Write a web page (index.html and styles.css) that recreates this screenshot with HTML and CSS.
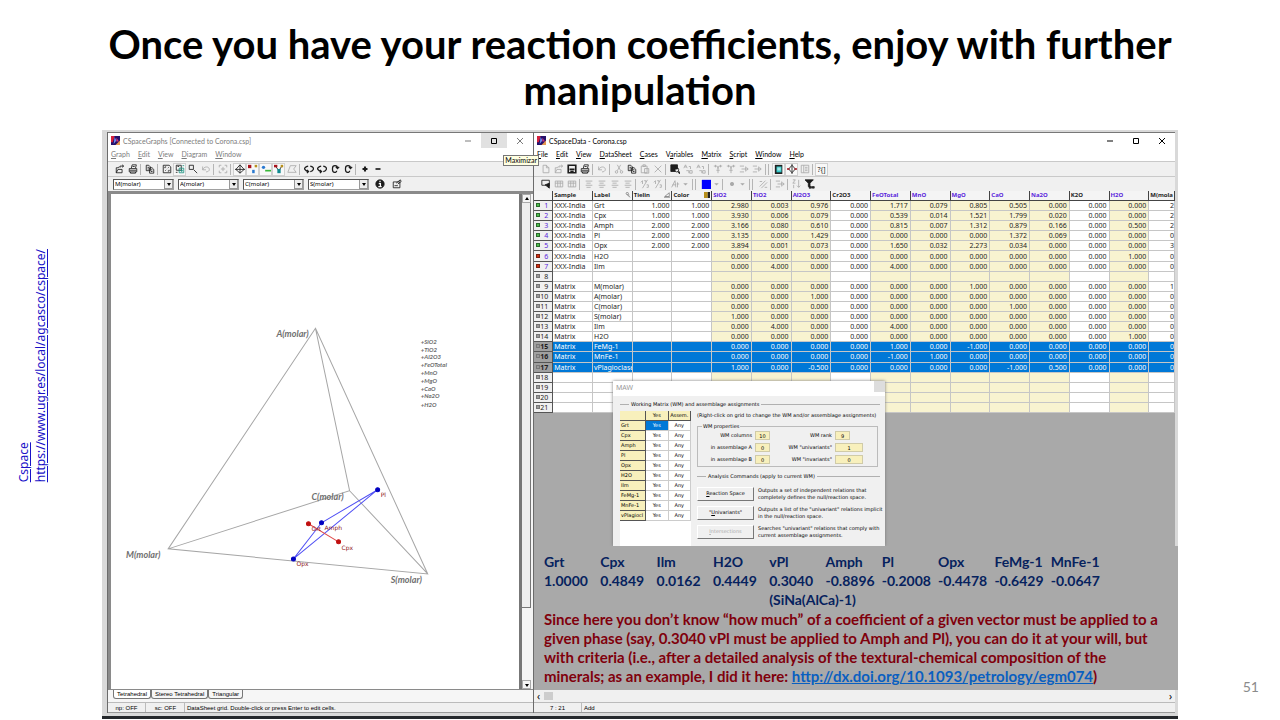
FILE: index.html
```html
<!DOCTYPE html>
<html lang="en">

<head>
  <meta charset="UTF-8">
  <meta name="viewport" content="width=device-width, initial-scale=1.0">
  <title>Reaction coefficients</title>
  <link rel="stylesheet" href="styles.css">
</head>

<body>
  <!-- toolbar icons -->
  <svg class="sprite" aria-hidden="true">
    <symbol id="i-open" viewBox="0 0 12 12"><path d="M1.500 10.500V4.500H4l1-1.500M1.500 10.500h7V6.500h-5l-2 4M6 4.500V2.500h4M8.500 1l2 1.500-2 1.500" /></symbol>
    <symbol id="i-print" viewBox="0 0 12 12"><path d="M4 5l1-4h5l-1 4M1.500 5.500h9v4h-9zM3 9.500v1.500h6V9.500M2 7.500h8M5.500 3h2.500" /></symbol>
    <symbol id="i-copy" viewBox="0 0 12 12"><path d="M1.500 1.500h3l2 2v4.500h-5zM5.500 4.500h3l2 2v4.500h-5zM3 4h2M3 6h2M7 7h2M7 9h2" /></symbol>
    <symbol id="i-fit" viewBox="0 0 12 12"><path d="M1.500 1.500h7l2 2v7h-9zM3.500 5V3.500H5M8.500 7v1.500H7M4 8l1-1M7 5l1-1" /></symbol>
    <symbol id="i-zoomfit" viewBox="0 0 12 12"><path d="M1.500 1.500h6v6h-6zM3 3h2M1 10h2" /><path class="s-teal" d="M5 5h5.500v5.500H5zM8 6v3.500M6.500 8h3M9 2h2" /></symbol>
    <symbol id="i-zoom" viewBox="0 0 12 12"><path d="M1.500 1.500h5v5h-5zM7 7l4 4" /></symbol>
    <symbol id="i-undo" viewBox="0 0 12 12"><path d="M2 3v4h4M2 7c2-5 8-4 8-.5 0 2-2 3-4 3" /></symbol>
    <symbol id="i-frame" viewBox="0 0 12 12"><path d="M1.500 4V1.500H4M8 1.500h2.500V4M10.500 8v2.500H8M4 10.500H1.500V8M3.500 6h5M6 3.500v5" /></symbol>
    <symbol id="i-tetra" viewBox="0 0 12 12"><path d="M6 1l5 5.500L6 11 1 6.500zM0 6.500h12M6 1v10" /></symbol>
    <symbol id="i-dots" viewBox="0 0 12 12"><path class="f-red" d="M0 1h4v4H0z" /><path class="f-gold" d="M8 1h3v3H8z" /><path class="f-blue" d="M5 7h3v4H5z" /></symbol>
    <symbol id="i-tie" viewBox="0 0 12 12"><circle class="f-blue" cx="3" cy="4" r="2" /><path class="f-green" d="M5 7h7v2H5z" /></symbol>
    <symbol id="i-dots2" viewBox="0 0 12 12"><path d="M2 3l4 5 3-5" /><path class="f-red" d="M0 1h4v3H0z" /><path class="f-gold" d="M8 1h3v3H8z" /><path class="f-teal" d="M4 6h4v5H4z" /></symbol>
    <symbol id="i-poly" viewBox="0 0 12 12"><path d="M4 2h7L8 6l3 4H1z" /></symbol>
    <symbol id="i-rot" viewBox="0 0 12 12"><path d="M5 2.500C2 3 0 5 1 6.500S4 9 5 9M3.500 7l2 2-2 2M7.500 2.500c3 .5 4.500 2.500 3.500 4.500-.5 1-2 2-3.500 2" stroke-width="1.500" /></symbol>
    <symbol id="i-turn" viewBox="0 0 12 12"><path d="M3 5c0-4 6-4 6 0M7 3.500l2 2 2-2M3 5v2c0 4 5 4 5 1" stroke-width="1.500" /></symbol>
    <symbol id="i-plus" viewBox="0 0 12 12"><path d="M3 6h6M6 3v6" stroke-width="2.500" /></symbol>
    <symbol id="i-minus" viewBox="0 0 12 12"><path d="M3 6h6" stroke-width="2" /></symbol>
    <symbol id="i-info" viewBox="0 0 12 12"><circle cx="6" cy="6" r="5" fill="currentColor" /><path class="s-white" d="M4.500 5.500h2v4M6 2v2M4 9h4" stroke-width="1.500" /></symbol>
    <symbol id="i-props" viewBox="0 0 12 12"><path d="M1.500 3.500h8v7h-8zM5 5l5-4 1 2-4 3M3 8h4" /></symbol>
    <symbol id="i-new" viewBox="0 0 12 12"><path d="M2.500 1.500h4l3 3v6h-7zM6.500 1.500v3h3" /></symbol>
    <symbol id="i-save" viewBox="0 0 12 12"><path d="M1.500 1.500h9v9h-9z" stroke-width="2" /><path d="M3 6.500h6M4 9h4" stroke-width="2" /></symbol>
    <symbol id="i-cut" viewBox="0 0 12 12"><path d="M4 1l4 7M8 1L4 8" /><circle cx="3" cy="9.500" r="1.500" /><circle cx="9" cy="9.500" r="1.500" /></symbol>
    <symbol id="i-paste" viewBox="0 0 12 12"><path d="M1.500 2.500h7v8h-7zM3.500 1h3v2h-3zM5.500 5.500h5v5.500h-5z" /></symbol>
    <symbol id="i-del" viewBox="0 0 12 12"><path d="M2 2l8 8M10 2l-8 8" /></symbol>
    <symbol id="i-find" viewBox="0 0 12 12"><path fill="currentColor" d="M1 1h8v5H6v3H1z" /><circle cx="8" cy="7" r="2.500" /><path d="M10 9l2 2.500" stroke-width="2" /></symbol>
    <symbol id="i-swap" viewBox="0 0 12 12"><path d="M1 5l2-4 2 4M2 3.500h2M7 3h2v3M4 8h3v3M8 8h3v3H8z" /></symbol>
    <symbol id="i-filter" viewBox="0 0 12 12"><path d="M1 2.500h4l1 3 1-3h4M6 5v6M3 1v3M9 1v3M4 7.500h4" /></symbol>
    <symbol id="i-insert" viewBox="0 0 12 12"><path d="M1 2.500h5M1 9.500h5M3 6h8M8 3v6M9 4l2 2-2 2" /></symbol>
    <symbol id="i-sheet" viewBox="0 0 12 12"><path class="f-black" d="M1 1h9v11H1z" /><path class="f-cyan" d="M3 3h6v7H3z" /><path class="s-white" d="M4 5h4M4 7h4" /></symbol>
    <symbol id="i-diamond" viewBox="0 0 12 12"><path d="M6 0v12M6 1.500l4 4.500-4 4.500L2 6z" /><path class="f-red" d="M0 5h3v2H0zM9 5h3v2H9z" /></symbol>
    <symbol id="i-list" viewBox="0 0 12 12"><path d="M1.500 1.500h9v9h-9zM4.500 1.500v9M6 4h3M6 6h3M6 8h3" /></symbol>
    <symbol id="i-pick" viewBox="0 0 12 12"><path d="M1 1.500h9v7M1 1.500v6h5" /><path fill="currentColor" d="M5 7l5-2v6z" /></symbol>
    <symbol id="i-grid" viewBox="0 0 12 12"><path d="M1.500 2.500h9v7h-9zM1.500 5h9M4.500 2.500v7M7.500 2.500v7" /></symbol>
    <symbol id="i-align" viewBox="0 0 12 12"><path d="M2 2.500h8M3 5h5M2 7.500h8M3 10h5" /></symbol>
    <symbol id="i-pct" viewBox="0 0 12 12"><path d="M9 1L3 11M1 4l2-2v4M8 7h2v3H8M5 2h2v2" /></symbol>
    <symbol id="i-font" viewBox="0 0 12 12"><path d="M2 10l4-8 1 8M3 7h4M9 4v6M8 6h3" /></symbol>
    <symbol id="i-caret" viewBox="0 0 12 12"><path fill="currentColor" stroke="none" d="M3 5h6L6 8z" /></symbol>
    <symbol id="i-square" viewBox="0 0 12 12"><path class="f-pure" d="M1 1h11v11H1z" /></symbol>
    <symbol id="i-dot" viewBox="0 0 12 12"><circle cx="6" cy="6" r="2" fill="currentColor" /></symbol>
    <symbol id="i-line" viewBox="0 0 12 12"><path d="M2 9l7-7M4 11l7-7M2 3h3M8 10h3" /></symbol>
    <symbol id="i-sort" viewBox="0 0 12 12"><path d="M1 1h3L1 5h3M2 7v4M8 1v9M6 8l2 2 2-2" /></symbol>
    <symbol id="i-funnel" viewBox="0 0 12 12"><path fill="currentColor" d="M0 1h10L6 5v4H4V5zM5 9h2v2H5zM8 9h1v2H8zM10 9h1v2h-1z" /></symbol>
    <symbol id="i-app" viewBox="0 0 10 10"><path d="M0 0h10v10H0z" fill="#24106a" /><path d="M0 0h4L2 7H0z" fill="#d4203c" /><path d="M5 10l5-5v5z" fill="#e89a50" /><path d="M4 1l2 4-3 4z" fill="#6f8df0" /><path d="M6 2l3 4H6z" fill="#c8337f" /></symbol>
    <symbol id="h-Label" viewBox="0 0 8 8"><circle cx="3" cy="2" r="1.500" /><path d="M3 4l4 3M5 3v2" /></symbol>
    <symbol id="h-Tielin" viewBox="0 0 8 8"><path d="M1 6l6-5v5zM0 7h8" /></symbol>
    <symbol id="h-Color" viewBox="0 0 8 8"><path class="f-gold" d="M0 0h5v8H0z" /><path class="f-black" d="M5 0h3v8H5z" /></symbol>
    <symbol id="w-min" viewBox="0 0 10 10"><path d="M2 5h6" /></symbol>
    <symbol id="w-max" viewBox="0 0 10 10"><path d="M2.500 2.500h5v5h-5z" /></symbol>
    <symbol id="w-close" viewBox="0 0 10 10"><path d="M2 2l6 6M8 2L2 8" /></symbol>
  </svg>

  <main class="slide">
    <h1>Once you have your reaction coefficients, enjoy with further manipulation</h1>

    <aside class="source">
      <a href="https://www.ugr.es/local/agcasco/cspace/">Cspace<br>https://www.ugr.es/local/agcasco/cspace/</a>
    </aside>

    <div class="capture">
      <!-- graphs window -->
      <section class="window graphs">
        <header class="titlebar">
          <svg class="app-icon"><use href="#i-app" /></svg>
          <span class="caption">CSpaceGraphs [Connected to Corona.csp]</span>
          <button class="win-btn" aria-label="Minimize"><svg><use href="#w-min" /></svg></button>
          <button class="win-btn hover" aria-label="Maximize"><svg><use href="#w-max" /></svg></button>
          <button class="win-btn" aria-label="Close"><svg><use href="#w-close" /></svg></button>
        </header>
        <nav class="menu">
          <button><u>G</u>raph</button><button><u>E</u>dit</button><button><u>V</u>iew</button><button><u>D</u>iagram</button><button><u>W</u>indow</button>
        </nav>
        <div class="toolbar" data-icons="open print | copy | fit zoomfit! zoom undo~ | frame~ | tetra! dots! tie! dots2! poly~ | rot rot turn turn | plus minus"></div>
        <div class="toolbar combos">
          <span class="combo"><select aria-label="Vertex M"><option>M(molar)</option></select><i></i></span>
          <span class="combo"><select aria-label="Vertex A"><option>A(molar)</option></select><i></i></span>
          <span class="combo"><select aria-label="Vertex C"><option>C(molar)</option></select><i></i></span>
          <span class="combo"><select aria-label="Vertex S"><option>S(molar)</option></select><i></i></span>
          <button class="tool" aria-label="info"><svg><use href="#i-info" /></svg></button>
          <button class="tool" aria-label="properties"><svg><use href="#i-props" /></svg></button>
        </div>
        <div class="plot-area">
          <svg class="plot" viewBox="0 0 407 494" preserveAspectRatio="xMinYMin meet">
            <path class="edge" d="M204 134L57 354L316 379ZL238 296L57 354M238 296L316 379" />
            <path class="tie-blue" d="M266 295L210 328L182 364Z" />
            <path class="tie-red" d="M197 329L227 347" />
            <g class="vertex">
              <text x="165" y="143">A(molar)</text>
              <text x="200" y="305">C(molar)</text>
              <text x="15" y="363">M(molar)</text>
              <text x="279" y="388">S(molar)</text>
            </g>
            <g class="legend">
              <text x="309" y="150">+SiO2</text>
              <text x="309" y="158">+TiO2</text>
              <text x="309" y="165">+Al2O3</text>
              <text x="309" y="173">+FeOTotal</text>
              <text x="309" y="181">+MnO</text>
              <text x="309" y="189">+MgO</text>
              <text x="309" y="197">+CaO</text>
              <text x="309" y="204">+Na2O</text>
              <text x="309" y="212">+H2O</text>
            </g>
            <g class="phase">
              <text x="269" y="302">Pl</text>
              <text x="213" y="335">Amph</text>
              <text x="200" y="336">Grt</text>
              <text x="230" y="355">Cpx</text>
              <text x="185" y="371">Opx</text>
            </g>
            <g class="dot-blue"><circle cx="266" cy="295" r="2" /><circle cx="210" cy="328" r="2" /><circle cx="182" cy="364" r="2" /></g>
            <g class="dot-red"><circle cx="197" cy="329" r="2" /><circle cx="227" cy="347" r="2" /></g>
          </svg>
          <div class="vscroll"><b class="up"></b><span class="thumb"></span><b class="down"></b></div>
        </div>
        <div class="tabs">
          <button class="active">Tetrahedral</button><button>Stereo Tetrahedral</button><button>Triangular</button>
        </div>
        <footer class="status">
          <span class="pane">np: OFF</span><span class="pane">sc: OFF</span><span class="msg">DataSheet grid. Double-click or press Enter to edit cells.</span>
        </footer>
        <span class="tooltip">Maximizar</span>
      </section>

      <!-- data window -->
      <section class="window data">
        <header class="titlebar">
          <svg class="app-icon"><use href="#i-app" /></svg>
          <span class="caption">CSpaceData - Corona.csp</span>
          <button class="win-btn" aria-label="Minimize"><svg><use href="#w-min" /></svg></button>
          <button class="win-btn" aria-label="Maximize"><svg><use href="#w-max" /></svg></button>
          <button class="win-btn" aria-label="Close"><svg><use href="#w-close" /></svg></button>
        </header>
        <nav class="menu">
          <button><u>F</u>ile</button><button><u>E</u>dit</button><button><u>V</u>iew</button><button><u>D</u>ataSheet</button><button><u>C</u>ases</button><button>V<u>a</u>riables</button><button><u>M</u>atrix</button><button><u>S</u>cript</button><button><u>W</u>indow</button><button><u>H</u>elp</button>
        </nav>
        <div class="toolbar" data-icons="new~ open~ save print | undo~ | cut~ copy paste~ del~ | find swap~ swap~ | filter~ filter~ insert~ insert~ || sheet! diamond! list~ | help!"></div>
        <div class="toolbar" data-icons="pick grid~ grid~ | align~ align~ align~ align~ | pct~ pct~ | font~ caret~ || square caret~ | dot~ caret~ || line~ | insert~ | sort~ funnel"></div>
        <div class="workspace">
          <table class="sheet">
            <colgroup id="cols"></colgroup>
            <thead><tr id="head"></tr></thead>
            <tbody id="rows"></tbody>
          </table>

          <div class="dialog">
            <header><span>MAW</span><button aria-label="Close dialog"></button></header>
            <div class="dialog-body">
              <h2 class="rule"><span>Working Matrix (WM) and assemblage assignments</span></h2>
              <div class="dialog-cols">
                <div class="matrix-box">
                  <table class="matrix">
                    <thead><tr><th></th><th>Yes</th><th>Assem.</th></tr></thead>
                    <tbody id="matrix"></tbody>
                  </table>
                </div>
                <div class="dialog-main">
                  <p class="hint">(Right-click on grid to change the WM and/or assemblage assignments)</p>
                  <fieldset>
                    <legend>WM properties</legend>
                    <label for="wm-col">WM columns</label><input id="wm-col" value="10" readonly>
                    <label for="wm-rank">WM rank</label><input id="wm-rank" value="9" readonly>
                    <label for="wm-a">in assemblage A</label><input id="wm-a" value="0" readonly>
                    <label for="wm-uni">WM "univariants"</label><input id="wm-uni" class="wide" value="1" readonly>
                    <label for="wm-b">in assemblage B</label><input id="wm-b" value="0" readonly>
                    <label for="wm-inv">WM "invariants"</label><input id="wm-inv" class="wide" value="0" readonly>
                  </fieldset>
                  <h2 class="rule"><span>Analysis Commands (apply to current WM)</span></h2>
                  <div class="commands">
                    <div class="command"><button><u>R</u>eaction Space</button><p>Outputs a set of independent relations that<br>completely defines the null/reaction space.</p></div>
                    <div class="command"><button>"<u>U</u>nivariants"</button><p>Outputs a list of the "univariant" relations implicit<br>in the null/reaction space.</p></div>
                    <div class="command"><button disabled><u>I</u>ntersections</button><p>Searches "univariant" relations that comply with<br>current assemblage assignments.</p></div>
                  </div>
                </div>
              </div>
            </div>
          </div>
        </div>

        <div class="note">
          <table class="coef">
            <tr><th>Grt</th><th>Cpx</th><th>Ilm</th><th>H2O</th><th>vPl</th><th>Amph</th><th>Pl</th><th>Opx</th><th>FeMg-1</th><th>MnFe-1</th></tr>
            <tr><td>1.0000</td><td>0.4849</td><td>0.0162</td><td>0.4449</td><td>0.3040</td><td>-0.8896</td><td>-0.2008</td><td>-0.4478</td><td>-0.6429</td><td>-0.0647</td></tr>
            <tr><td colspan="4"></td><td colspan="6">(SiNa(AlCa)-1)</td></tr>
          </table>
          <p>Since here you don’t know “how much” of a coefficient of a given vector must be applied to a<br>given phase (say, 0.3040 vPl must be applied to Amph and Pl), you can do it at your will, but<br>with criteria (i.e., after a detailed analysis of the textural-chemical composition of the<br>minerals; as an example, I did it here: <a href="http://dx.doi.org/10.1093/petrology/egm074">http://dx.doi.org/10.1093/petrology/egm074</a>)</p>
        </div>
        <div class="hscroll"><span>‹</span><b></b><span class="end">›</span></div>
        <footer class="status"><span class="pane">7 : 21</span><span class="msg">Add</span></footer>
      </section>
    </div>

    <div class="page-number">51</div>
  </main>

  <script src="script.js"></script>
</body>

</html>
```
FILE: styles.css
```css
*,
*::before,
*::after {
  box-sizing: border-box;
  margin: 0;
  padding: 0;
}

body {
  background: #fff;
  color: #000;
  font-family: "Noto Sans", sans-serif;
  font-size: 7px;
}

button,
input,
select {
  font: inherit;
  color: inherit;
  border: 0;
  background: none;
}

.sprite {
  position: absolute;
  width: 0;
  height: 0;
}

.slide {
  min-height: 100vh;
  display: grid;
  grid-template-columns: 102px minmax(0, 1fr) 102px;
  grid-template-rows: 130px 1fr;
}

h1 {
  grid-column: 2;
  grid-row: 1;
  padding-top: 21px;
  text-align: center;
  font-family: Lato, sans-serif;
  font-size: 40px;
  font-weight: 700;
  line-height: 46px;
}

.source {
  grid-column: 1;
  grid-row: 1 / -1;
  display: flex;
  align-items: center;
  padding: 12px 0 0 15px;
}

.source a {
  writing-mode: vertical-rl;
  transform: rotate(180deg);
  color: #1a12c8;
  font-size: 12px;
  line-height: 17px;
  white-space: nowrap;
}

.page-number {
  grid-column: 3;
  grid-row: 2;
  align-self: end;
  padding: 0 21px 24px 0;
  text-align: right;
  font-family: Lato, sans-serif;
  font-size: 14px;
  line-height: 18px;
  color: #8b8b8b;
}

/* captured desktop */
.capture {
  grid-column: 2;
  grid-row: 2;
  display: grid;
  grid-template-columns: 426fr 642fr;
  padding: 2px 3px 6px 5px;
  background: linear-gradient(#d9d9d9, #d9d9d9) 0 0 / 100% calc(100% - 3px) no-repeat, #25282c;
  border-bottom: 1px solid #fff;
}

.window {
  position: relative;
  min-width: 0;
  display: flex;
  flex-direction: column;
  background: #f0f0f0;
  border-left: 1px solid #6b6b6b;
}

.titlebar {
  display: flex;
  align-items: center;
  height: 16px;
  padding-left: 3px;
  background: #fff;
  border-top: 1px solid #777;
}

.app-icon {
  width: 9px;
  height: 9px;
  margin-right: 3px;
}

.caption {
  flex: 1;
}

.titlebar,
.menu,
.tooltip {
  font-family: Lato, sans-serif;
}

.graphs .titlebar,
.graphs .menu {
  color: #7c7c7c;
}

.win-btn {
  width: 26px;
  height: 15px;
  display: flex;
  justify-content: center;
  align-items: center;
}

.win-btn svg {
  width: 10px;
  height: 10px;
  fill: none;
  stroke: currentColor;
}

.win-btn.hover {
  background: #e1e1e1;
  color: #000;
}

.menu {
  display: flex;
  gap: 8px;
  height: 13px;
  padding-left: 3px;
  background: #fff;
}

.menu button {
  line-height: 13px;
}

.toolbar {
  display: flex;
  align-items: center;
  height: 15px;
  padding-left: 5px;
  border-top: 1px solid #c9c9c9;
}

.tool {
  width: 13px;
  height: 13px;
  display: flex;
  flex-shrink: 0;
  align-items: center;
  justify-content: center;
  color: #1c1c1c;
  line-height: 13px;
}

.tool[aria-label="caret"] {
  width: 9px;
}

.tool svg {
  width: 10px;
  height: 10px;
  fill: none;
  stroke: currentColor;
}

.tool.off {
  color: #a9a9a9;
}

.tool.pressed {
  background: #f8f8f8;
  border: 1px solid #d0d0d0;
}

.s-white { stroke: #fff; }
.s-teal { stroke: #189080; }
.f-red { fill: #a8121c; stroke: none; }
.f-gold { fill: #b8901c; stroke: none; }
.f-blue { fill: #2a7ad0; stroke: none; }
.f-green { fill: #38b838; stroke: none; }
.f-teal { fill: #108a90; stroke: none; }
.f-cyan { fill: #30c8c8; stroke: none; }
.f-black { fill: #222; stroke: none; }
.f-pure { fill: #0000ff; stroke: none; }

.sep {
  width: 1px;
  height: 11px;
  margin: 0 2px 0 1px;
  background: #b5b5b5;
}

.sep.double {
  width: 4px;
  margin: 0 3px 0 2px;
  background: none;
  border: solid #b5b5b5;
  border-width: 0 1px;
}

.combos {
  gap: 4px;
}

.combo {
  display: flex;
  width: 61px;
  height: 11px;
  background: #fff;
  border: 1px solid #a0a0a0;
  border-top-color: #555;
  border-left-color: #555;
}

.combo select {
  flex: 1;
  min-width: 0;
  appearance: none;
  padding-left: 1px;
  font-size: 6px;
  line-height: 9px;
}

.combo i {
  width: 9px;
  background: #eee;
  border: 1px solid #999;
  border-width: 0 1px 1px 1px;
}

.combo i::before,
.vscroll b::before {
  content: "";
  display: block;
  margin: 3px auto 0;
  width: 0;
  border: solid transparent;
  border-width: 3px 2px 0;
  border-top-color: #000;
}

.plot-area {
  flex: 1;
  min-height: 0;
  display: flex;
  background: #fff;
  border: solid #8a8a8a;
  border-width: 3px 0 1px 3px;
}

.plot {
  flex: 1;
  min-width: 0;
  font-family: Lato, sans-serif;
}

.edge {
  fill: none;
  stroke: #a6a6a6;
}

.tie-blue {
  fill: none;
  stroke: #5050f4;
}

.tie-red {
  stroke: #e04848;
}

.dot-blue { fill: #0000c0; stroke: #0000c0; }
.dot-red { fill: #c01010; stroke: #c01010; }

.vertex {
  fill: #6f6f6f;
  font-size: 9px;
  font-weight: 700;
  font-style: italic;
}

.legend {
  fill: #6a6a6a;
  font-size: 6px;
  font-weight: 700;
  font-style: italic;
}

.phase {
  fill: #8c1420;
  font-family: "DejaVu Sans", sans-serif;
  font-size: 6px;
}

.vscroll {
  width: 14px;
  display: flex;
  flex-direction: column;
  padding-right: 2px;
  background: #f5f5f5;
  border-left: 3px solid #777;
}

.vscroll b {
  height: 9px;
  border: 1px solid #aaa;
}

.vscroll .up::before {
  border-width: 0 2px 3px;
  border-bottom-color: #000;
  margin-top: 2px;
}

.vscroll .thumb {
  flex: 1;
  background: #eee;
  border-bottom: 1px solid #777;
  border-right: 1px solid #777;
}

.vscroll .down {
  margin-top: 72px;
}

.tabs {
  display: flex;
  height: 12px;
  padding-left: 5px;
  font-family: "Liberation Sans", sans-serif;
  font-size: 6px;
  background: #f6f6f6;
}

.tabs button {
  padding: 0 3px;
  height: 9px;
  line-height: 8px;
  border: 1px solid #777;
  border-top: 0;
  border-radius: 0 0 3px 3px;
}

.tabs .active {
  background: #fff;
}

.status {
  display: flex;
  height: 11px;
  font-family: "Liberation Sans", sans-serif;
  font-size: 6px;
  line-height: 10px;
  border-top: 1px solid #bbb;
  border-bottom: 1px solid #999;
}

.status .pane {
  width: 38px;
  margin-right: 1px;
  text-align: center;
  border-right: 1px solid #bbb;
}

.status .msg {
  padding-left: 1px;
}

.data .status .pane {
  width: 48px;
}

.tooltip {
  position: absolute;
  top: 23px;
  right: -6px;
  z-index: 2;
  height: 11px;
  padding: 0 1px;
  line-height: 9px;
  background: #ffffe1;
  border: 1px solid #777;
}

/* data sheet */
.workspace {
  position: relative;
  flex: 1;
  min-height: 0;
  overflow: hidden;
  background: #a9a9a9;
}

.sheet {
  width: 100%;
  height: 222px;
  table-layout: fixed;
  border-collapse: separate;
  border-spacing: 0;
  color: #1e1e1e;
  background: #fff;
}

.sheet .col-num { width: 3%; }
.sheet .col-val { width: 6.2%; }

.sheet th,
.sheet td {
  height: 10px;
  line-height: 9px;
  white-space: nowrap;
  overflow: hidden;
  border: solid #c6c6c6;
  border-width: 0 1px 1px 0;
}

.sheet td {
  padding: 0 2px;
  text-align: right;
}

.sheet td:last-child {
  padding-right: 0;
}

.sheet thead th {
  padding-left: 1px;
  text-align: left;
  font-size: 6px;
  background: #f4f4f4;
  border-color: #444;
}

.sheet thead svg {
  float: right;
  width: 6px;
  height: 6px;
  margin: 1px 1px 0 0;
  fill: none;
  stroke: #777;
}

.sheet thead .oxide {
  color: #5a24dc;
}

.sheet td.oxide {
  background: #f8f3d0;
}

.sheet td.name {
  padding-left: 1px;
  text-align: left;
}

.sheet tbody th {
  padding-right: 4px;
  text-align: right;
  font-weight: 400;
  background: #f0f0f0;
  border-color: #555;
}

.sheet tbody th::before {
  content: "";
  float: left;
  width: 4px;
  height: 4px;
  margin: 2px 0 0 2px;
  background: #999;
  border: 1px solid #777;
}

.sheet tbody th.ok,
.sheet tbody th.hidden {
  color: #5a24dc;
}

.sheet tbody th.ok::before {
  background: #4cc04c;
  border-color: #2c6a2c;
}

.sheet tbody th.hidden::before {
  background: #d03010;
  border-color: #7a2010;
}

.sheet .selected td {
  color: #fff;
  background: #0078d7;
}

.sheet .selected th {
  font-weight: 700;
  background: #a0a0a0;
}

/* MAW dialog */
.dialog {
  position: absolute;
  left: 79px;
  top: 190px;
  bottom: 0;
  width: 272px;
  overflow: hidden;
  display: flex;
  flex-direction: column;
  font-family: "DejaVu Sans", sans-serif;
  font-size: 5px;
  line-height: 7px;
  background: #f0f0f0;
  box-shadow: 0 0 3px #777;
}

.dialog header {
  display: flex;
  justify-content: space-between;
  height: 15px;
  padding-left: 3px;
  font-family: "Noto Sans", sans-serif;
  font-size: 7px;
  line-height: 13px;
  color: #9a9a9a;
  background: #fff;
}

.dialog header button {
  width: 11px;
  height: 11px;
  background: #ddd;
}

.dialog-body {
  flex: 1;
  display: flex;
  flex-direction: column;
  padding: 5px 5px 0 7px;
}

.rule {
  display: flex;
  align-items: center;
  gap: 2px;
  font-size: inherit;
  font-weight: 400;
}

.rule::before,
.rule::after {
  content: "";
  width: 9px;
  border-top: 1px solid #b0b0b0;
}

.rule::after {
  flex: 1;
}

.dialog-cols {
  flex: 1;
  display: flex;
  gap: 6px;
  padding-top: 3px;
}

.matrix-box {
  width: 71px;
  flex-shrink: 0;
  background: #fff;
}

.matrix {
  width: 100%;
  table-layout: fixed;
  border-collapse: separate;
  border-spacing: 0;
}

.matrix th,
.matrix td {
  height: 10px;
  padding: 0 1px;
  line-height: 9px;
  text-align: center;
  font-weight: 400;
  white-space: nowrap;
  border: solid #ccc;
  border-width: 0 1px 1px 0;
}

.matrix th {
  background: #f8f0bc;
  border-color: #555;
}

.matrix th:first-child {
  width: 26px;
  padding-right: 0;
  text-align: left;
}

.matrix .current {
  color: #fff;
  background: #0078d7;
}

.dialog-main {
  flex: 1;
  min-width: 0;
  padding-top: 1px;
}

.hint {
  white-space: nowrap;
}

.dialog fieldset {
  display: grid;
  grid-template-columns: 54px 17px 57px 28px;
  gap: 3px;
  align-items: center;
  margin: 4px 2px 6px 0;
  padding: 2px 0;
  border: 1px solid #bbb;
}

.dialog legend {
  margin-left: 4px;
  padding: 0 1px;
  height: 6px;
}

.dialog label {
  text-align: right;
  white-space: nowrap;
}

.dialog input {
  width: 15px;
  height: 9px;
  text-align: center;
  line-height: 7px;
  background: #f8f0bc;
  border: 1px solid #d0cba8;
}

.dialog input.wide {
  width: 28px;
}

.commands {
  padding-top: 4px;
}

.command {
  display: flex;
  align-items: center;
  gap: 4px;
  height: 19px;
}

.command button {
  width: 57px;
  height: 14px;
  flex-shrink: 0;
  border: 1px solid #777;
  border-top-color: #fff;
  border-left-color: #fff;
}

.command button:disabled {
  color: #aaa;
}

.command p {
  white-space: nowrap;
}

/* slide text over the sheet */
.note {
  position: relative;
  margin-right: -3px;
  padding: 6px 0 4px 10px;
  font-family: Lato, sans-serif;
  font-size: 15px;
  font-weight: 700;
  line-height: 19px;
  color: #80000c;
  background: #a9a9a9;
}

.note p {
  white-space: nowrap;
}

.note a {
  color: #0a5fc0;
}

.coef {
  width: 563px;
  margin-bottom: 1px;
  table-layout: fixed;
  border-collapse: collapse;
  text-align: left;
  white-space: nowrap;
  font-size: 14px;
  color: #06225e;
}

.hscroll {
  display: flex;
  align-items: center;
  gap: 4px;
  height: 12px;
  padding: 0 3px;
  font-size: 10px;
  line-height: 8px;
}

.hscroll b {
  width: 9px;
  height: 8px;
  background: #cdcdcd;
}

.hscroll .end {
  margin-left: auto;
}
```
FILE: script.js
```js
// toolbars: "name~" is disabled, "name!" is pressed, "|" is a separator
document.querySelectorAll('[data-icons]').forEach((bar) => {
  bar.dataset.icons.split(' ').forEach((item) => {
    if (item[0] === '|') {
      const sep = document.createElement('span');
      sep.className = item === '||' ? 'sep double' : 'sep';
      bar.appendChild(sep);
      return;
    }
    const name = item.replace(/[~!]/, '');
    const btn = document.createElement('button');
    btn.className = 'tool';
    if (item.endsWith('~')) btn.classList.add('off');
    if (item.endsWith('!')) btn.classList.add('pressed');
    btn.setAttribute('aria-label', name);
    btn.innerHTML = name === 'help' ? '?{]' : `<svg><use href="#i-${name}" /></svg>`;
    bar.appendChild(btn);
  });
});

const columns = ['Sample', 'Label', 'Tielin', 'Color', 'SiO2', 'TiO2', 'Al2O3', 'Cr2O3', 'FeOTotal',
  'MnO', 'MgO', 'CaO', 'Na2O', 'K2O', 'H2O', 'M(mola'];
const oxides = ['SiO2', 'TiO2', 'Al2O3', 'FeOTotal', 'MnO', 'MgO', 'CaO', 'Na2O', 'H2O'];
const marked = ['Label', 'Tielin', 'Color'];

const data = [
  'XXX-India,Grt,1.000,1.000,2.980,0.003,0.976,0.000,1.717,0.079,0.805,0.505,0.000,0.000,0.000,2',
  'XXX-India,Cpx,1.000,1.000,3.930,0.006,0.079,0.000,0.539,0.014,1.521,1.799,0.020,0.000,0.000,2',
  'XXX-India,Amph,2.000,2.000,3.166,0.080,0.610,0.000,0.815,0.007,1.312,0.879,0.166,0.000,0.500,2',
  'XXX-India,Pl,2.000,2.000,3.135,0.000,1.429,0.000,0.000,0.000,0.000,1.372,0.069,0.000,0.000,0',
  'XXX-India,Opx,2.000,2.000,3.894,0.001,0.073,0.000,1.650,0.032,2.273,0.034,0.000,0.000,0.000,3',
  'XXX-India,H2O,,,0.000,0.000,0.000,0.000,0.000,0.000,0.000,0.000,0.000,0.000,1.000,0',
  'XXX-India,Ilm,,,0.000,4.000,0.000,0.000,4.000,0.000,0.000,0.000,0.000,0.000,0.000,0',
  '',
  'Matrix,M(molar),,,0.000,0.000,0.000,0.000,0.000,0.000,1.000,0.000,0.000,0.000,0.000,1',
  'Matrix,A(molar),,,0.000,0.000,1.000,0.000,0.000,0.000,0.000,0.000,0.000,0.000,0.000,0',
  'Matrix,C(molar),,,0.000,0.000,0.000,0.000,0.000,0.000,0.000,1.000,0.000,0.000,0.000,0',
  'Matrix,S(molar),,,1.000,0.000,0.000,0.000,0.000,0.000,0.000,0.000,0.000,0.000,0.000,0',
  'Matrix,Ilm,,,0.000,4.000,0.000,0.000,4.000,0.000,0.000,0.000,0.000,0.000,0.000,0',
  'Matrix,H2O,,,0.000,0.000,0.000,0.000,0.000,0.000,0.000,0.000,0.000,0.000,1.000,0',
  'Matrix,FeMg-1,,,0.000,0.000,0.000,0.000,1.000,0.000,-1.000,0.000,0.000,0.000,0.000,0',
  'Matrix,MnFe-1,,,0.000,0.000,0.000,0.000,-1.000,1.000,0.000,0.000,0.000,0.000,0.000,0',
  'Matrix,vPlagioclase,,,1.000,0.000,-0.500,0.000,0.000,0.000,0.000,-1.000,0.500,0.000,0.000,0',
  '', '', '', ''
];

const kind = (name) => (oxides.includes(name) ? 'oxide' : '');
const mark = (name) => (marked.includes(name) ? `<svg><use href="#h-${name}" /></svg>` : '');

document.getElementById('cols').innerHTML =
  '<col class="col-num">' + '<col class="col-val">'.repeat(15) + '<col>';
document.getElementById('head').innerHTML =
  '<th></th>' + columns.map((c) => `<th class="${kind(c)}">${mark(c)}${c}</th>`).join('');

document.getElementById('rows').innerHTML = data.map((line, i) => {
  const cells = line.split(',');
  const state = i < 5 ? 'ok' : i < 7 ? 'hidden' : '';
  const tds = columns.map((c, j) => `<td class="${j < 2 ? 'name' : kind(c)}">${cells[j] || ''}</td>`).join('');
  return `<tr class="${i > 13 && i < 17 ? 'selected' : ''}"><th class="${state}">${i + 1}</th>${tds}</tr>`;
}).join('');

const phases = ['Grt', 'Cpx', 'Amph', 'Pl', 'Opx', 'H2O', 'Ilm', 'FeMg-1', 'MnFe-1', 'vPlagiocl'];
document.getElementById('matrix').innerHTML = phases.map((p, i) =>
  `<tr><th>${p}</th><td class="${i === 0 ? 'current' : ''}">Yes</td><td>Any</td></tr>`).join('');
```
